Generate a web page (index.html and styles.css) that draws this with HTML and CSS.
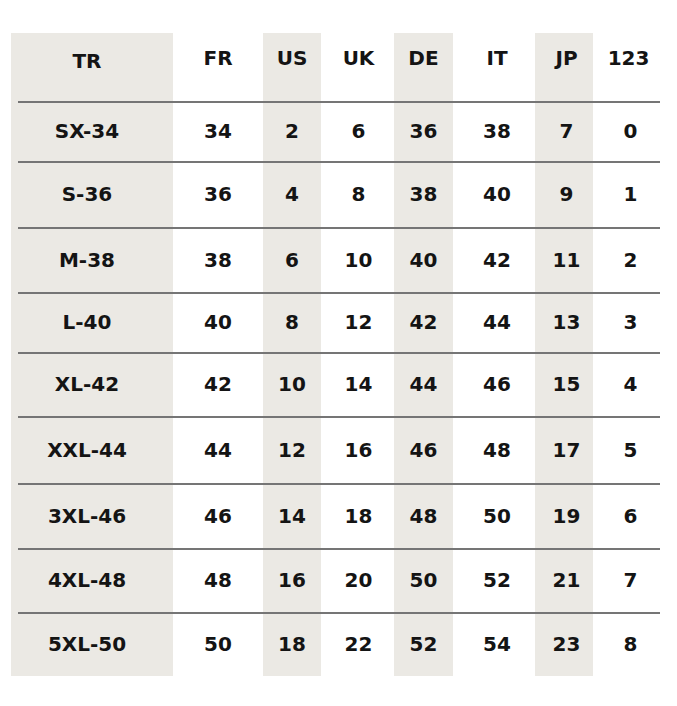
FILE: index.html
```html
<!DOCTYPE html>
<html lang="en">
<head>
<meta charset="utf-8">
<title>Size chart</title>
<link rel="stylesheet" href="styles.css">
</head>
<body>
<div class="chart">
  <div class="row head">
    <div class="cell">TR</div><div class="cell">FR</div><div class="cell">US</div><div class="cell">UK</div><div class="cell">DE</div><div class="cell">IT</div><div class="cell">JP</div><div class="cell">123</div>
  </div>
  <div class="row">
    <div class="cell">SX-34</div><div class="cell">34</div><div class="cell">2</div><div class="cell">6</div><div class="cell">36</div><div class="cell">38</div><div class="cell">7</div><div class="cell">0</div>
  </div>
  <div class="row">
    <div class="cell">S-36</div><div class="cell">36</div><div class="cell">4</div><div class="cell">8</div><div class="cell">38</div><div class="cell">40</div><div class="cell">9</div><div class="cell">1</div>
  </div>
  <div class="row">
    <div class="cell">M-38</div><div class="cell">38</div><div class="cell">6</div><div class="cell">10</div><div class="cell">40</div><div class="cell">42</div><div class="cell">11</div><div class="cell">2</div>
  </div>
  <div class="row">
    <div class="cell">L-40</div><div class="cell">40</div><div class="cell">8</div><div class="cell">12</div><div class="cell">42</div><div class="cell">44</div><div class="cell">13</div><div class="cell">3</div>
  </div>
  <div class="row">
    <div class="cell">XL-42</div><div class="cell">42</div><div class="cell">10</div><div class="cell">14</div><div class="cell">44</div><div class="cell">46</div><div class="cell">15</div><div class="cell">4</div>
  </div>
  <div class="row">
    <div class="cell">XXL-44</div><div class="cell">44</div><div class="cell">12</div><div class="cell">16</div><div class="cell">46</div><div class="cell">48</div><div class="cell">17</div><div class="cell">5</div>
  </div>
  <div class="row">
    <div class="cell">3XL-46</div><div class="cell">46</div><div class="cell">14</div><div class="cell">18</div><div class="cell">48</div><div class="cell">50</div><div class="cell">19</div><div class="cell">6</div>
  </div>
  <div class="row">
    <div class="cell">4XL-48</div><div class="cell">48</div><div class="cell">16</div><div class="cell">20</div><div class="cell">50</div><div class="cell">52</div><div class="cell">21</div><div class="cell">7</div>
  </div>
  <div class="row">
    <div class="cell">5XL-50</div><div class="cell">50</div><div class="cell">18</div><div class="cell">22</div><div class="cell">52</div><div class="cell">54</div><div class="cell">23</div><div class="cell">8</div>
  </div>
</div>
</body>
</html>
```

FILE: styles.css
```css
html, body {
  margin: 0;
  padding: 0;
  background: #ffffff;
}

.chart {
  display: grid;
  grid-template-columns: 162px 90px 58px 73px 59px 82px 58px 67px;
  grid-template-rows: 68px 60px 66px 65px 60px 64px 67px 65px 64px 64px;
  margin: 33px 0 0 11px;
  font-family: "DejaVu Sans", "Liberation Sans", sans-serif;
  font-weight: bold;
  font-size: 20px;
  color: #141414;
}

.row {
  display: contents;
}

.cell {
  display: flex;
  align-items: center;
  justify-content: center;
  line-height: 22px;
}

.cell:nth-child(1),
.cell:nth-child(3),
.cell:nth-child(5),
.cell:nth-child(7) {
  background-color: #ebe9e4;
}

.cell:nth-child(1) {
  padding-right: 10px;
}

.cell:nth-child(4) {
  padding-left: 2px;
}

.cell:nth-child(6) {
  padding-left: 6px;
}

.cell:nth-child(7) {
  padding-left: 5px;
}

.cell:nth-child(8) {
  padding-left: 8px;
}

.head .cell:nth-child(8) {
  padding-left: 4px;
}

.row:not(.head) .cell {
  background-image: linear-gradient(#757575, #757575);
  background-repeat: no-repeat;
  background-size: 100% 2px;
  background-position: 0 0;
}

.row:not(.head) .cell:nth-child(1) {
  background-position: 7px 0;
}

.head .cell {
  align-items: flex-start;
  padding-top: 14px;
}

.head .cell:nth-child(1) {
  padding-top: 17px;
}
```
